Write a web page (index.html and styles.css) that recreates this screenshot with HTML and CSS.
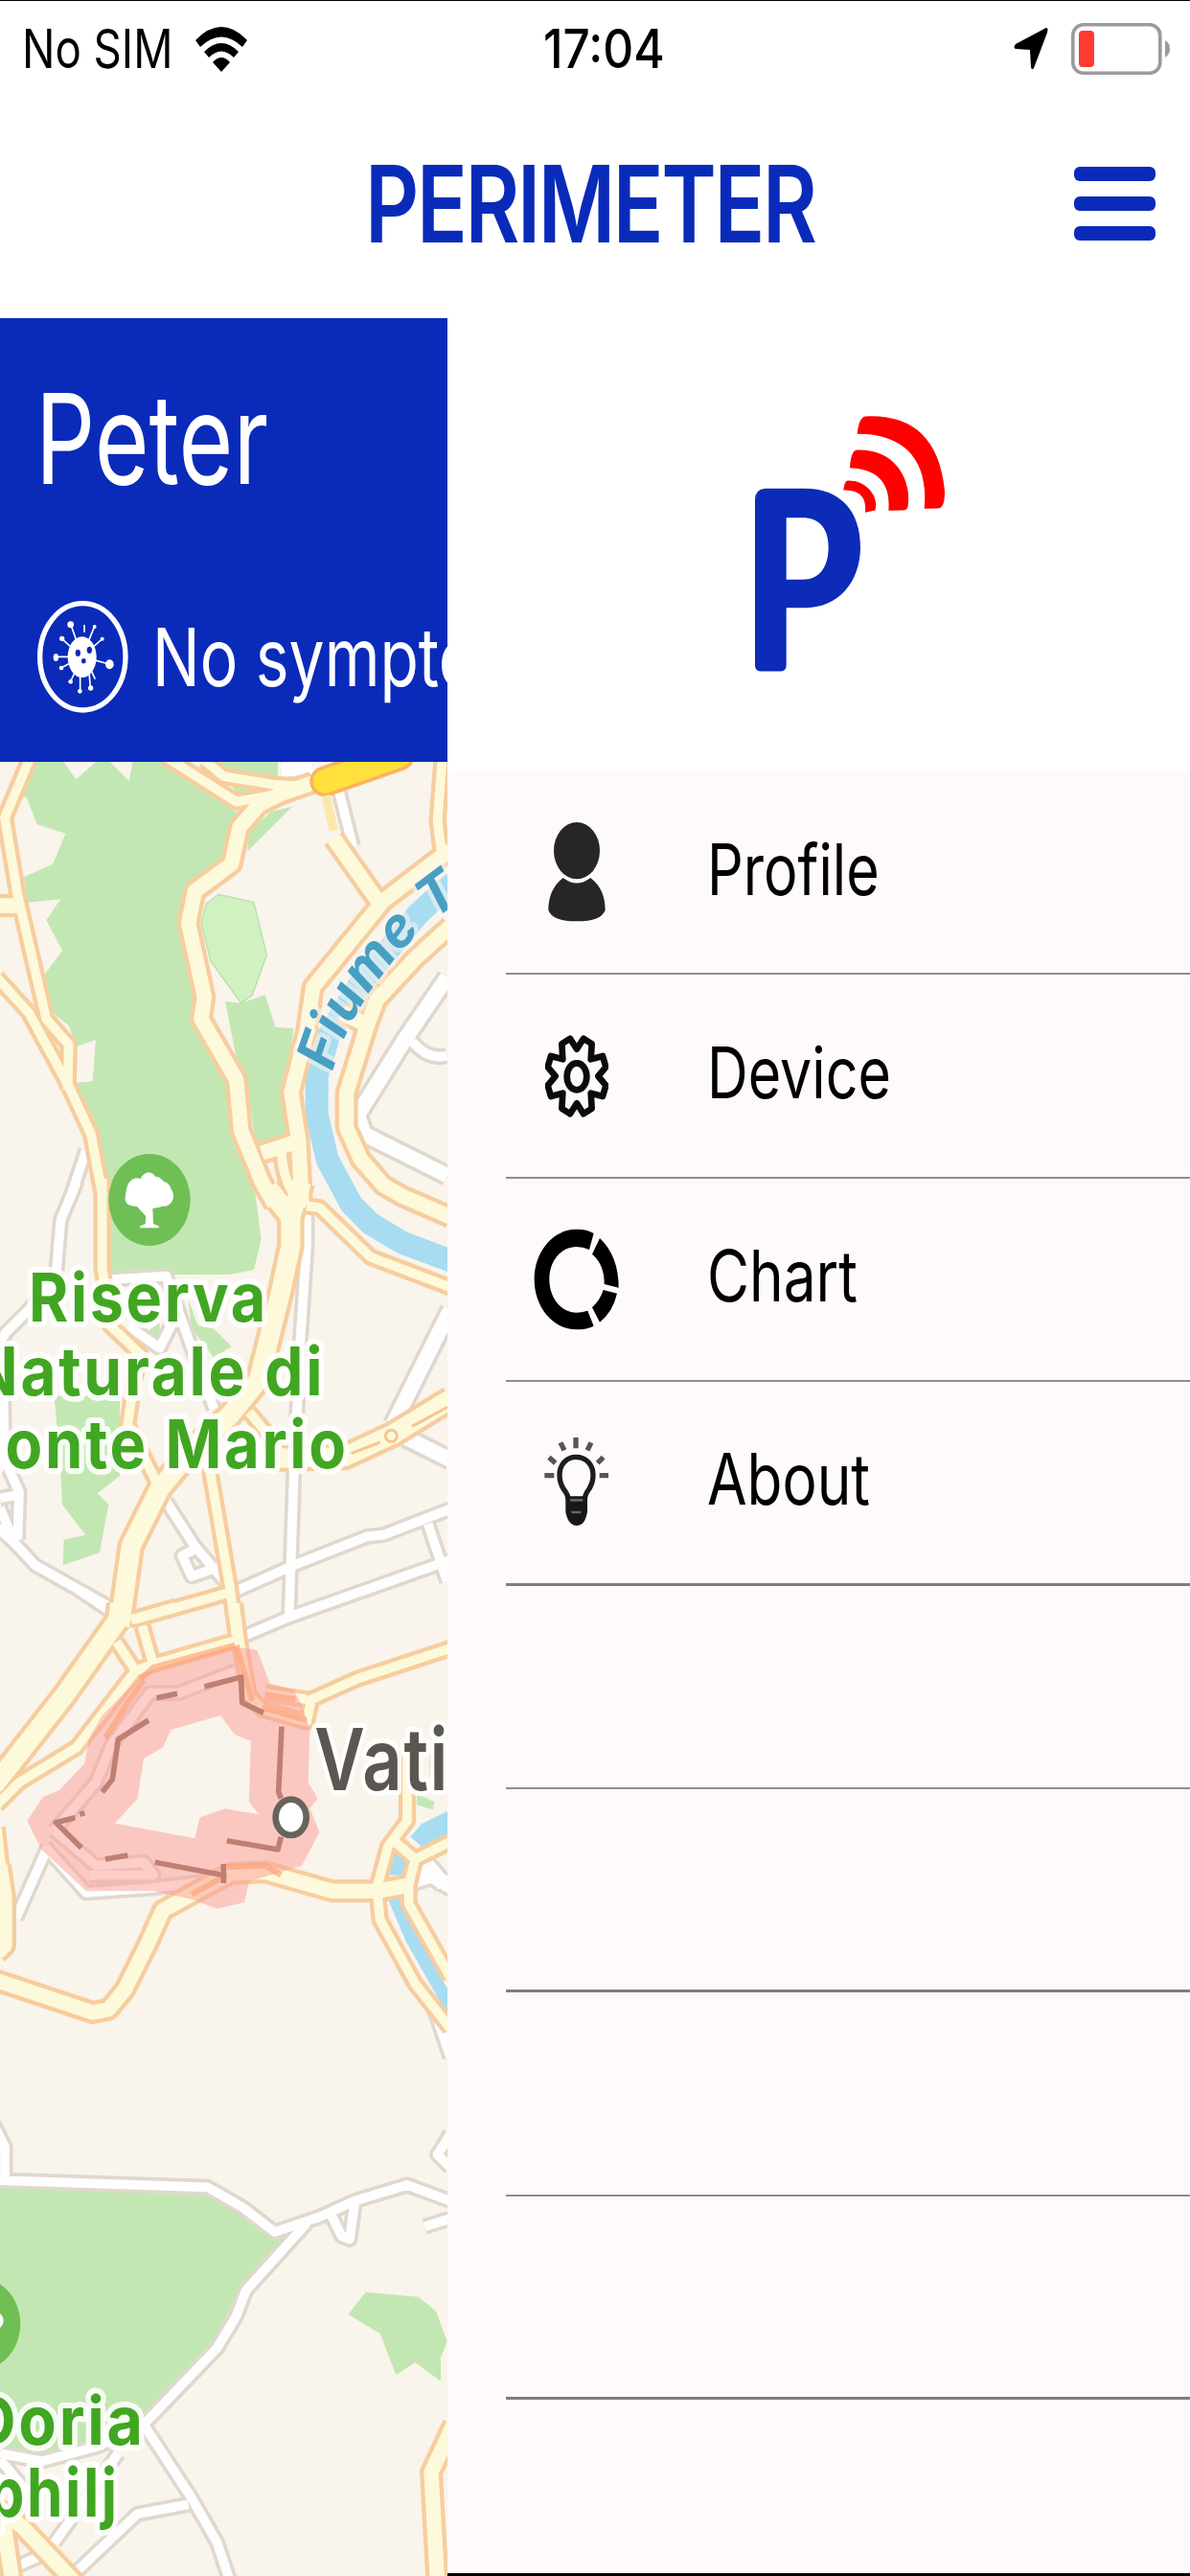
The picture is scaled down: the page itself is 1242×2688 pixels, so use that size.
FILE: index.html
```html
<!DOCTYPE html>
<html lang="en">
<head>
<meta charset="utf-8">
<title>Perimeter</title>
<link rel="stylesheet" href="styles.css">
</head>
<body>
<div class="screen">
  <div class="statusbar">
    <div class="carrier"><span class="t t-sim">No SIM</span>
      <svg class="wifi" viewBox="0 0 54 48"><path d="M27 48L18 38Q27 28 36 38Z"/><path d="M9 27L14 33Q27 20 40 33L45 27Q27 9 9 27Z"/><path d="M0 15L5 22Q27 1 49 22L54 15Q27-13 0 15Z"/></svg>
    </div>
    <div class="clock"><span class="t t-clock">17:04</span></div>
    <div class="power">
      <svg class="arrow" viewBox="0 0 36 44"><path d="M35 1Q36 0 35 5L21 42Q19 45 18 41L17 23L2 22Q-1 21 2 17L32 1Q34-1 35 1Z"/></svg>
      <svg class="battery" viewBox="0 0 104 54"><rect x="1.8" y="1.8" width="91" height="50.4" rx="11"/><path class="cap" d="M98 18Q103 21 103 27T98 36Z"/><rect class="level" x="8" y="8" width="16" height="38" rx="4"/></svg>
    </div>
  </div>
  <header class="header">
    <h1 class="title"><span class="t t-title">PERIMETER</span></h1>
    <div class="burger"><i></i><i></i><i></i></div>
  </header>
  <main class="main">
    <section class="home">
      <div class="person">
        <div class="name"><span class="t t-name">Peter</span></div>
        <div class="status">
          <svg class="virus" viewBox="0 0 285 351"><ellipse class="ring" cx="142" cy="175" rx="134" ry="167"/>
            <path class="spikes" d="M140 175L105 75M147 75V98M140 175L178 82M140 175L202 120M140 175L76 118M140 175H58M140 175L74 210M140 175L225 198M140 175L104 252M134 175V285M158 175L166 272M160 200L181 245"/>
            <g class="knobs"><circle cx="104" cy="74" r="10"/><circle cx="179" cy="81" r="6"/><circle cx="203" cy="119" r="6"/><circle cx="77" cy="118" r="8"/><ellipse cx="58" cy="177" rx="8" ry="12"/><circle cx="75" cy="210" r="7"/><ellipse cx="226" cy="199" rx="13" ry="15"/><circle cx="104" cy="253" r="7"/><circle cx="133" cy="283" r="7"/><circle cx="167" cy="273" r="8"/><ellipse cx="140" cy="176" rx="45" ry="64"/></g>
            <g class="spots"><ellipse cx="127" cy="163" rx="8" ry="11"/><ellipse cx="163" cy="154" rx="8" ry="11"/><ellipse cx="145" cy="188" rx="7" ry="8"/></g>
          </svg>
          <span class="t t-status">No symptoms</span>
        </div>
      </div>
      <svg class="map" viewBox="0 2385 1401 5679" preserveAspectRatio="none">
        <defs>
          <g id="streets">
            <g transform="translate(0 2370)">
              <path class="w1" d="M1060 100L1105 280M1290 890Q1340 950 1400 935M270 1230L220 1380"/>
              <path class="w2" d="M1400 690L1270 880L1120 1120L1140 1180L1400 1310M880 40L980 30"/>
            </g>
            <g transform="translate(0 3720)">
              <path class="w1" d="M240 -20L190 100L175 280L90 380L20 450L0 480M10 640L15 850L60 950L55 1100M0 970L55 960M0 1000L45 1110M960 80L960 180L940 480L930 700L920 900L905 1340M520 980L610 1120L720 1250M610 1130L570 1150L600 1215L700 1180M740 1260L920 1180L1150 1090L1200 1085L1420 1000M720 1420L910 1340L1420 1160M1340 1050L1400 1230"/>
              <path class="w1" d="M-10 1060L45 1110L110 1180L360 1320M350 285L520 275L600 500L670 690M400 430L500 500L550 400"/>
              <path class="w2" d="M1410 380L1230 740M1270 780L1410 850"/>
            </g>
            <g transform="translate(0 5040)">
              <path class="w1" d="M250 -60L370 20M150 740L50 965M140 740L270 885L480 870L640 850M170 690L300 540L350 420L470 260L560 260L740 190M170 690L300 800L450 790L480 830L280 830M1360 1250L1410 1400"/>
              <path class="w2" d="M1290 850L1350 830L1420 870M1330 790L1390 860"/>
            </g>
            <g transform="translate(0 6510)">
              <path class="w1" d="M-20 140L15 210V315M-10 315L650 337L760 400L860 477L1000 430L1110 380L1275 330L1410 380M1410 170L1370 235L1410 275M1330 460L1410 435M1035 420L1070 490L1095 500L1110 390M960 450L770 660L740 740L680 840L450 1080L600 1310L680 1450L720 1570M0 1170L130 1195L300 1150L450 1085M590 1330L430 1360L240 1540M170 1450L370 1170M50 1525L130 1490M0 1190L110 1320"/>
            </g>
          </g>
          <g id="roads">
            <g transform="translate(0 2370)">
              <path class="w1" d="M95 0L15 190L55 430L85 560L145 820L215 900L212 1040M-10 690L90 800L215 1030L285 1180L322 1380M520 0L740 140L850 120M640 10L700 60L850 85L970 95M1385 0L1370 200L1385 320M880 1230Q890 1370 960 1400"/>
              <path class="w2" d="M980 80L880 115L810 150L750 220L725 335L610 420L590 520L640 750L630 820L740 1010L755 1170L820 1330L860 1400M-10 465H55M1045 255L1190 460M1410 290L1200 450L980 720L960 860L912 1050L935 1200L945 1400M820 1240L940 1200M1410 530L1300 630L1180 760L1150 840L1085 1050L1085 1160L1130 1260L1200 1340L1260 1375L1410 1440M1070 800L1150 840"/>
            </g>
            <g transform="translate(0 3720)">
              <path class="w1" d="M320 -30V250L345 430L440 520L420 600L400 740L500 940M960 55L1000 60L1160 215L1410 310M655 870L720 1250L740 1400M720 1265L420 1350M780 700L830 760L880 830"/>
              <path class="w3" d="M840 0L910 90M945 -20L910 90V180L880 320L810 600L720 710L600 820L500 940L410 1120L375 1370"/>
              <path class="w3" d="M1410 660L1230 770L1080 840L860 845"/>
            </g>
            <g transform="translate(0 5040)">
              <path class="w3" d="M375 -20L370 30L200 270L20 500L-20 550"/>
              <path class="w1" d="M735 -20L750 100L780 270L820 310L960 350L975 280L1120 215L1410 120M830 260L960 280M410 30L550 -10M480 170L740 95M365 100L425 190L240 430L60 540L-10 610M445 50L480 170L425 190M-10 680L15 900M1275 440V660L1215 740L1180 870L1190 970L1300 1170L1410 1310M1230 720L1300 780L1280 860L1280 920L1410 1150M1300 780L1410 725"/>
              <path class="w2" d="M0 800L15 900V1050L-10 1075M700 840L720 825L830 820L1040 880L1180 880L1290 860M720 825L600 890L510 940L460 1050L390 1190L340 1250L290 1260L-10 1160"/>
            </g>
            <g transform="translate(0 6510)">
              <path class="w2" d="M1420 1080L1350 1230L1370 1580M-10 1340L70 1400L240 1580M10 1380L40 1580"/>
            </g>
          </g>
        </defs>
        <rect class="land" y="2385" width="1401" height="5679"/>
        <g class="park">
          <path transform="translate(0 2370)" d="M110 0H190L238 70L300 15H345L405 75L418 0H520L750 180L720 330L590 410L570 520L620 750L610 830L740 1010L760 1180L800 1370L818 1510L795 1605L720 1620H520L340 1615V1380L290 1180L230 1020L290 1015L300 885L240 905L215 840L165 800L140 680L195 605L145 510L190 445L85 455L75 375L165 335L205 240L115 210L85 130L70 120ZM640 0H870V60L700 50ZM915 155L775 295L780 230L850 170ZM700 65L860 105L760 130ZM705 765L755 770L830 745L862 845L920 850L890 1050L905 1190L800 1210L775 1030L740 940Z"/>
          <path transform="translate(0 3720)" d="M590 350L620 430L670 440L725 495L670 530L600 440ZM460 450L500 420V480ZM170 650H375V900L305 955L340 990L312 1140L197 1180L200 1100L268 1085L195 990L188 860Z"/>
          <path transform="translate(0 5040)" d="M1345 450H1375V515H1345ZM1305 575L1360 600L1355 625L1305 610Z"/>
          <path transform="translate(0 6510)" d="M0 335L640 350L760 420L850 495L920 480L740 680L660 840L450 1060L300 1150L130 1170L0 1150ZM1145 665L1310 680L1365 725L1400 820L1380 870V945L1300 885L1240 925L1190 795L1090 735Z"/>
        </g>
        <path class="park-light" transform="translate(0 2370)" d="M685 430L795 455L835 620L790 745L755 770L660 640L630 520L645 460Z"/>
        <use href="#streets" class="street-case"/>
        <use href="#streets" class="street-fill"/>
        <g class="water">
          <path transform="translate(0 2370)" d="M1420 390L1310 490L1120 720L1030 870L992 1000V1120L1025 1260L1100 1400L1160 1460L1260 1520L1420 1580"/>
          <path class="pool" transform="translate(0 5040)" d="M1285 710L1320 670L1401 630V705L1320 740ZM1240 750L1215 830H1260L1275 795Z"/>
          <path class="narrow" transform="translate(0 5040)" d="M1230 890L1290 1030L1420 1260"/>
        </g>
        <use href="#roads" class="road-case"/>
        <use href="#roads" class="road-fill"/>
        <path class="highway-case" d="M1018 2446L1250 2365"/><path class="highway" d="M1018 2446L1250 2365"/>
        <path class="lane" d="M1020 2490L1045 2600"/>
        <ellipse class="rotary" cx="1225" cy="4495" rx="18" ry="18"/>
        <path class="rotary" d="M1290 4465L1401 4405M1100 4550L1190 4515"/>
        <g transform="translate(0 5040)">
          <path class="zone" d="M480 190L730 115L805 125L845 230L920 250L945 300L970 370L965 540L995 590L970 620L1000 695L945 800L780 850L765 915L680 935L600 905L480 880H270L130 750L85 660L135 585L185 565L265 480L280 400L320 330L440 210ZM535 375L510 430L450 465L430 590L360 668L610 715L625 650L705 622L810 640L780 600L785 410L735 390L690 330Z"/>
          <path class="zone-road" d="M440 215L480 180L735 110M740 110L790 285M830 265L925 280M820 305L960 345M330 400L400 290L450 220M710 805L830 800L880 830M600 890L710 830"/>
          <path class="border" d="M490 275L555 262M640 240L755 210L758 290L825 322M882 365L872 570L880 590M880 710L870 750L710 722M700 795V855M700 830L485 790M400 768L330 780M255 745L175 665L235 650M250 640L265 635M320 570L352 530L370 405L465 345"/>
          <ellipse class="pin" cx="911" cy="649" rx="48" ry="56"/>
        </g>
        <g class="poi"><ellipse cx="468" cy="3756" rx="128" ry="144"/><ellipse cx="-64" cy="7275" rx="128" ry="144"/>
          <path class="tree" d="M438 3844V3838L455 3832L457 3808L428 3776Q385 3776 393 3740Q396 3706 412 3694Q425 3684 440 3690Q450 3670 468 3670Q482 3674 488 3684Q500 3682 512 3698Q530 3702 536 3722Q548 3738 540 3758Q530 3778 508 3776Q488 3782 478 3782L480 3832L497 3838V3844Z"/><circle class="tree" cx="-17" cy="7265" r="28"/></g>
        <path id="river-line" class="guide" d="M1042 3355C1085 3190 1190 3050 1300 2930Q1390 2850 1500 2780L1800 2620"/>
        <text class="river-name"><textPath href="#river-line">Fiume Tevere</textPath></text>
        <g class="park-name">
          <text x="90" y="4138" textLength="750" lengthAdjust="spacingAndGlyphs">Riserva</text>
          <text x="-90" y="4368" textLength="1108" lengthAdjust="spacingAndGlyphs">Naturale di</text>
          <text x="-168" y="4595" textLength="1259" lengthAdjust="spacingAndGlyphs">Monte Mario</text>
          <text x="-90" y="7652" textLength="545" lengthAdjust="spacingAndGlyphs">Doria</text>
          <text x="-445" y="7878" textLength="819" lengthAdjust="spacingAndGlyphs">Pamphilj</text>
        </g>
        <text class="city-name" x="985" y="5605" textLength="1325" lengthAdjust="spacingAndGlyphs">Vatican City</text>
      </svg>
    </section>
    <aside class="drawer">
      <div class="brand">
        <svg class="logo" viewBox="0 0 600 800"><path class="stem" fill-rule="evenodd" d="M32 227H155C270 227 330 300 330 410C330 520 260 600 160 600H98V780Q98 799 78 799H20Q0 799 0 780V262Q0 230 32 227ZM98 318V512H150C200 512 230 475 230 410S195 318 150 318Z"/>
          <path class="wave" d="M345 1Q570 -10 594 235Q595 289 572 289L530 290C545 130 460 55 320 56Q325 5 345 1ZM318 106C440 100 490 200 479 280Q478 296 460 295L418 296C425 205 380 165 297 162Q300 108 318 106ZM290 202C350 200 390 255 376 295L345 302C350 250 325 232 277 232Q280 203 290 202Z"/></svg>
      </div>
      <ul class="menu">
        <li><span class="icon"><svg width="62" height="104" viewBox="0 0 186 312"><g fill="#262626"><ellipse cx="93" cy="89" rx="72" ry="89"/><path d="M50 174Q93 207 136 174C170 200 182 235 182 275Q170 310 93 310T4 275C4 235 18 198 50 174Z"/></g></svg></span><span class="label"><span class="t t-profile">Profile</span></span></li>
        <li><span class="icon"><svg width="66" height="86" viewBox="0 0 198 258"><g fill="none" stroke="#0b0b0b" stroke-width="20" stroke-linejoin="round"><path d="M78 11L99 44L120 11L146 28L143 76L180 66L190 100L166 129L190 158L180 192L143 182L146 230L120 247L99 214L78 247L52 230L55 182L18 192L8 158L32 129L8 100L18 66L55 76L52 28Z"/><ellipse cx="99" cy="130" rx="31" ry="42"/></g></svg></span><span class="label"><span class="t t-device">Device</span></span></li>
        <li><span class="icon"><svg width="90" height="106" viewBox="0 0 270 318"><path d="M188 15Q168 2 134 2C60 2 2 73 2 159S60 316 134 316Q168 316 188 305L169 257Q150 263 134 263C86 263 49 217 49 159S86 57 134 57Q155 57 174 66ZM207 30Q266 86 266 185L221 174Q222 113 183 80ZM261 203Q248 260 207 293L183 247Q208 224 218 192Z"/></svg></span><span class="label"><span class="t t-chart">Chart</span></span></li>
        <li><span class="icon"><svg width="70" height="98" viewBox="0 0 210 294"><g fill="none" stroke="#1d1d1d" stroke-width="16"><path d="M78 200Q78 185 64 168Q51 148 51 124C51 88 75 67 103 67S156 88 156 124Q156 148 143 168Q130 185 130 200" /><path d="M102 6V40M54 22L66 46M150 22L138 46M18 68L38 86M188 68L170 86M4 125H34M176 125H204" opacity=".75"/></g><path d="M70 190H138V240Q132 268 122 276Q103 288 88 276Q76 268 70 240Z" fill="#171717"/><path d="M84 202H124M88 240H118" stroke="#666" stroke-width="8"/></svg></span><span class="label"><span class="t t-about">About</span></span></li>
        <li></li><li></li><li></li><li></li><li></li>
      </ul>
    </aside>
  </main>
</div>
</body>
</html>
```
FILE: styles.css
```css
* { box-sizing: border-box; }
body { margin: 0; background: #fff; font-family: Inter, "Liberation Sans", sans-serif; color: #000; }
svg { display: block; flex: none; }
.screen { width: 1242px; height: 2688px; display: flex; flex-direction: column; overflow: hidden; border-top: 1px solid #000; }

/* Labels are set narrow; each is scaled from its left edge */
.t { display: inline-block; white-space: nowrap; transform-origin: 0 50%; transform: scaleX(var(--sx, .82)); }

.statusbar { height: 100px; display: grid; grid-template-columns: 567px 1fr auto; align-items: center; font-size: 56px; line-height: 60px; }
.carrier { display: flex; align-items: center; padding-left: 23px; }
.t-sim { width: 181px; --sx: .815; }
.wifi { width: 54px; height: 48px; }
.t-clock { font-weight: 500; --sx: .885; }
.power { display: flex; align-items: center; gap: 24px; padding-right: 20px; }
.arrow { width: 36px; height: 44px; }
.battery { width: 104px; height: 54px; }
.battery rect { fill: none; stroke: #9b9b9b; stroke-width: 3.6; }
.battery .cap { fill: #9b9b9b; }
.battery .level { fill: #ff3b30; stroke: none; }

.header { height: 231px; display: flex; justify-content: space-between; padding: 45px 36px 0 381px; color: #0a2bb9; }
.title { margin: 0; width: 470px; font-size: 111px; line-height: 134px; font-weight: 600; }
.t-title { letter-spacing: -3px; --sx: .786; }
.burger { width: 85px; display: flex; flex-direction: column; gap: 16px; padding-top: 28px; }
.burger i { height: 15px; border-radius: 6px; background: #0a2bb9; }

.main { flex: 1; display: grid; grid-template-columns: 467px 775px; min-height: 0; }
.home { overflow: hidden; display: flex; flex-direction: column; }
.person { height: 463px; background: #0a2bb9; color: #fff; padding: 48px 0 0 39px; flex: none; }
.name { font-size: 130px; line-height: 156px; height: 200px; margin-left: -2px; }
.t-name { --sx: .75; }
.status { display: flex; align-items: center; gap: 25px; font-size: 84px; line-height: 116px; padding-top: 47px; }
.t-status { --sx: .785; }
.virus { width: 95px; height: 117px; }
.virus .ring { fill: none; stroke: #fff; stroke-width: 16; }
.spikes { fill: none; stroke: #fff; stroke-width: 5; }
.knobs { fill: #fff; }
.spots { fill: #0a2bb9; }

.map { width: 467px; height: 1893px; }
.map path { stroke-linejoin: round; }
.land { fill: #f9f4ec; }
.park { fill: #c3e7b2; }
.park-light { fill: #d0f2c0; stroke: #b9ddab; stroke-width: 4; }
.water path { fill: none; stroke: #a8dcf0; stroke-width: 72; }
.water .narrow { stroke-width: 40; }
.water .pool { fill: #a8dcf0; stroke: none; }
.w1 { stroke-width: calc(29px + var(--case)); }
.w2 { stroke-width: calc(46px + var(--case)); }
.w3 { stroke-width: calc(60px + var(--case)); }
.street-case, .street-fill, .road-case, .road-fill { fill: none; }
.street-case { --case: 22px; stroke: #e0d8ce; }
.street-fill { --case: 0px; stroke: #fefefe; }
.road-case { --case: 26px; stroke: #f7cd9f; }
.road-fill { --case: 0px; stroke: #fcfadb; }
.highway-case { stroke: #fbb45c; stroke-width: 96; stroke-linecap: round; }
.highway { stroke: #ffe03c; stroke-width: 74; stroke-linecap: round; }
.lane { stroke: #fde6ae; stroke-width: 28; }
.rotary { fill: none; stroke: #f6c48f; stroke-width: 9; }
.zone { fill: #fb9c95; fill-opacity: .5; fill-rule: evenodd; }
.zone-road { fill: none; stroke: #fda276; stroke-width: 18; opacity: .65; }
.border { fill: none; stroke: #be8074; stroke-width: 17; }
.pin { fill: #fff; stroke: #67645c; stroke-width: 20; }
.poi ellipse { fill: #6fbf55; }
.tree { fill: #fff; }
.guide { fill: none; }
.map text { font-weight: 700; paint-order: stroke; stroke-linejoin: round; }
.river-name { font-size: 172px; letter-spacing: 4px; font-style: italic; fill: #479fc4; stroke: rgba(249, 246, 238, .55); stroke-width: 28px; }
.park-name { font-size: 210px; letter-spacing: 9px; fill: #41a621; stroke: rgba(255, 255, 255, .85); stroke-width: 36px; }
.map .city-name { font-weight: 600; font-size: 268px; letter-spacing: 6px; fill: #5b5750; stroke: rgba(255, 255, 255, .85); stroke-width: 32px; }

.drawer { background: #fefaf9; border-bottom: 3px solid #000; display: flex; flex-direction: column; overflow: hidden; }
.brand { height: 473px; flex: none; background: #fff; padding: 102px 0 0 321px; }
.logo { width: 200px; height: 267px; }
.stem { fill: #0c2bb8; }
.wave { fill: #fe0000; }
.menu { list-style: none; margin: 0; padding: 0 0 0 61px; font-size: 74px; line-height: 90px; }
.menu li { height: 212.4px; display: flex; align-items: center; border-bottom: 2px solid #8f8d8c; }
.menu li:nth-child(2n+4) { border-bottom: 3px solid #7f7e7d; }
.icon { width: 147px; display: flex; justify-content: center; }
.label { padding-left: 63px; padding-bottom: 7px; }
.t-profile, .t-device { --sx: .8; }
.t-chart, .t-about { --sx: .815; }
```
